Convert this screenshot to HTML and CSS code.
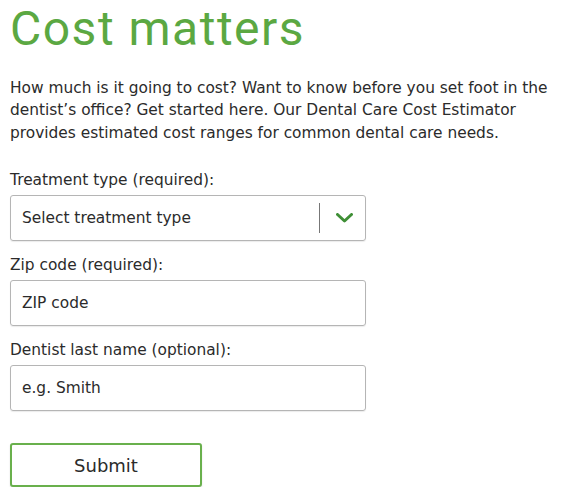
FILE: index.html
```html
<!DOCTYPE html>
<html lang="en">
<head>
<meta charset="utf-8">
<title>Cost matters</title>
<link rel="stylesheet" href="styles.css">
</head>
<body>
<main class="page">
  <h1 class="title">Cost matters</h1>
  <p class="intro">How much is it going to cost? Want to know before you set foot in the dentist’s office? Get started here. Our Dental Care Cost Estimator provides estimated cost ranges for common dental care needs.</p>
  <form class="form">
    <div class="field">
      <label class="label">Treatment type (required):</label>
      <div class="select">
        <span class="select-text">Select treatment type</span>
        <span class="select-sep"></span>
        <svg class="chev" width="17" height="10" viewBox="0 0 17 10"><polyline points="1.5,1.5 8.5,8 15.5,1.5" fill="none" stroke="#3f8f36" stroke-width="3" stroke-linecap="round" stroke-linejoin="round"/></svg>
      </div>
    </div>
    <div class="field">
      <label class="label">Zip code (required):</label>
      <div class="input">ZIP code</div>
    </div>
    <div class="field">
      <label class="label">Dentist last name (optional):</label>
      <div class="input">e.g. Smith</div>
    </div>
    <button type="button" class="submit">Submit</button>
  </form>
</main>
</body>
</html>
```

FILE: styles.css
```css
html, body {
  margin: 0;
  padding: 0;
  background: #fff;
}
body {
  font-family: "DejaVu Sans", "Liberation Sans", sans-serif;
  color: #2b2b2b;
}
.page {
  padding: 0 10px;
}
.title {
  margin: 0;
  font-family: Roboto, "Liberation Sans", sans-serif;
  font-size: 48px;
  font-weight: 400;
  line-height: 57px;
  color: #5ba842;
  letter-spacing: 1.5px;
}
.intro {
  margin: 19.5px 0 0;
  font-size: 15.4px;
  line-height: 22.5px;
}
.form {
  margin-top: 25px;
}
.field {
  display: flex;
  flex-direction: column;
  margin-bottom: 13px;
}
.label {
  font-size: 15.4px;
  line-height: 22px;
  margin-bottom: 4px;
}
.select, .input {
  box-sizing: border-box;
  width: 356px;
  height: 46px;
  border: 1px solid #b5b5b5;
  border-radius: 3px;
  box-shadow: 0 1px 1px rgba(0,0,0,0.08);
  display: flex;
  align-items: center;
  padding: 0 11px;
  font-size: 15.4px;
}
.select-text {
  flex: 1;
}
.select-sep {
  width: 1px;
  height: 30px;
  background: #777;
  margin-right: 16px;
}
.chev {
  display: block;
  margin-right: 1px;
}
.submit {
  box-sizing: border-box;
  margin-top: 19px;
  width: 192px;
  height: 44px;
  background: #fff;
  border: 2px solid #69b04c;
  border-radius: 3px;
  box-shadow: 0 1px 2px rgba(0,0,0,0.12);
  font-family: "DejaVu Sans", "Liberation Sans", sans-serif;
  font-size: 18px;
  color: #2b2b2b;
  padding: 0;
}
```
